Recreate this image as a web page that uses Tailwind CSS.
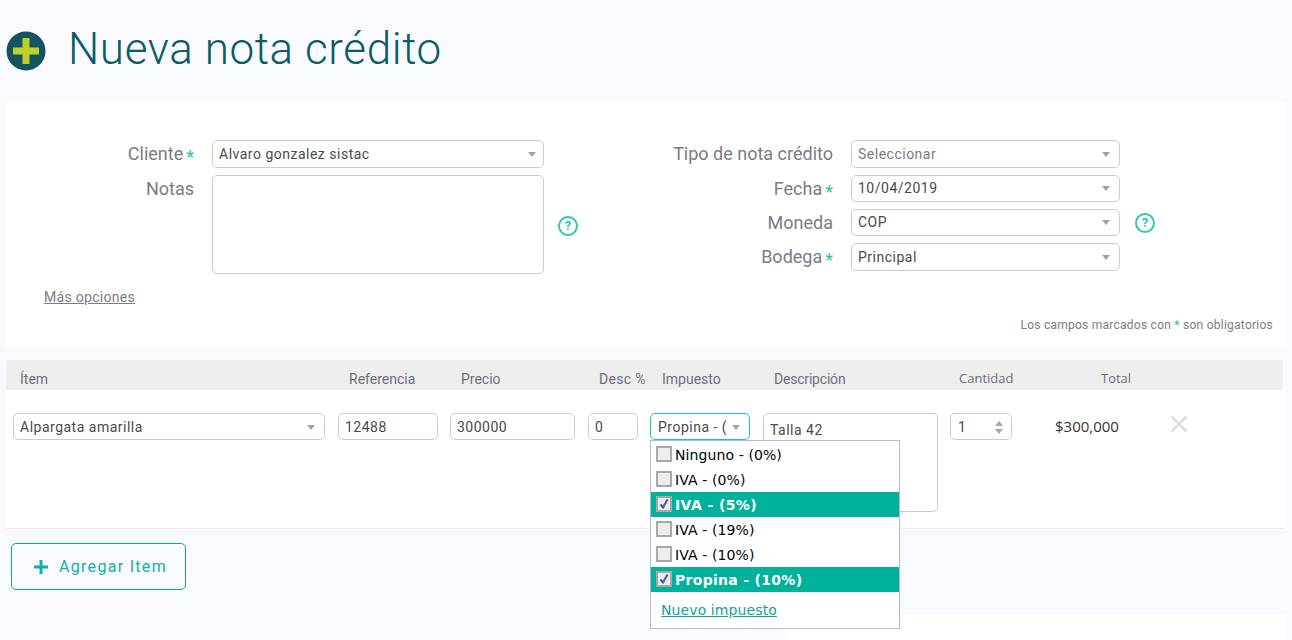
<!DOCTYPE html>
<html lang="es">
<head>
    <meta charset="UTF-8">
    <title>Nueva nota crédito</title>
    <script src="https://cdn.jsdelivr.net/npm/@tailwindcss/browser@4"></script>
</head>
<body class="bg-[#f9faff] font-['Roboto',sans-serif] h-[640px] overflow-hidden relative">

    <!-- Titulo -->
    <div class="h-[102px] pl-[6px] pt-[31px] flex items-start">
        <svg width="40" height="40" viewBox="0 0 40 40" class="shrink-0">
            <circle cx="20" cy="20" r="19.5" fill="#14535f"/>
            <path d="M16.500 7h7v9.500H33v7h-9.500V33h-7v-9.500H7v-7h9.500z" fill="#bdd12a"/>
        </svg>
        <h1 class="ml-[22px] -mt-[10px] text-[44px] leading-[56px] font-light text-[#0b5c68] tracking-[0.6px]">Nueva nota crédito</h1>
    </div>

    <!-- Formulario -->
    <div class="mx-[6px] w-[1279px] h-[245px] bg-white pt-[38px] relative">
        <div class="flex">
            <div class="w-[538px] shrink-0">
                <div class="flex items-center h-[28px]">
                    <div class="w-[188px] shrink-0 text-right text-[18px] text-[#7b7b86] pb-[2px]">Cliente<span class="relative top-[3px] text-[#1fc4ad] ml-[3px]">*</span></div>
                    <div class="ml-[18px] w-[332px] shrink-0 h-[28px] border border-[#cccccc] rounded-[5px] flex items-center justify-between pl-[6px] pr-[7px] text-[14px] text-[#4a4a4a] tracking-[0.5px]">
                        <span>Alvaro gonzalez sistac</span>
                        <span class="w-0 h-0 border-x-[4px] border-x-transparent border-t-[5px] border-t-[#a0a0aa]"></span>
                    </div>
                </div>
                <div class="flex mt-[7px]">
                    <div class="w-[188px] shrink-0 text-right text-[18px] text-[#7b7b86] leading-[28px]">Notas</div>
                    <div class="ml-[18px] w-[332px] shrink-0 h-[99px] border border-[#cccccc] rounded-[5px]"></div>
                    <div class="ml-[14px] mt-[41px]">
                        <div class="w-[20px] h-[20px] rounded-full border-2 border-[#2cc8b2] text-[#2cc8b2] text-[13px] font-bold flex items-center justify-center">?</div>
                    </div>
                </div>
                <a class="block ml-[38px] mt-[13px] text-[14px] text-[#7b7b86] underline tracking-[0.3px]">Más opciones</a>
            </div>

            <div class="ml-[101px]">
                <div class="flex items-center h-[28px]">
                    <div class="w-[188px] shrink-0 text-right text-[18px] text-[#7b7b86] whitespace-nowrap pb-[2px]">Tipo de nota crédito</div>
                    <div class="ml-[18px] w-[269px] h-[28px] border border-[#cccccc] rounded-[5px] flex items-center justify-between pl-[6px] pr-[9px] text-[14px] text-[#7b7b86] tracking-[0.5px]">
                        <span>Seleccionar</span>
                        <span class="w-0 h-0 border-x-[4px] border-x-transparent border-t-[5px] border-t-[#a0a0aa]"></span>
                    </div>
                </div>
                <div class="flex items-center h-[27px] mt-[7px]">
                    <div class="w-[188px] shrink-0 text-right text-[18px] text-[#7b7b86] whitespace-nowrap">Fecha<span class="relative top-[3px] text-[#1fc4ad] ml-[3px]">*</span></div>
                    <div class="ml-[18px] w-[269px] h-[27px] border border-[#cccccc] rounded-[5px] flex items-center justify-between pl-[6px] pr-[9px] text-[14px] text-[#4a4a4a] tracking-[0.5px]">
                        <span>10/04/2019</span>
                        <span class="w-0 h-0 border-x-[4px] border-x-transparent border-t-[5px] border-t-[#a0a0aa]"></span>
                    </div>
                </div>
                <div class="flex items-center h-[27px] mt-[7px]">
                    <div class="w-[188px] shrink-0 text-right text-[18px] text-[#7b7b86]">Moneda</div>
                    <div class="ml-[18px] w-[269px] h-[27px] border border-[#cccccc] rounded-[5px] flex items-center justify-between pl-[6px] pr-[9px] text-[14px] text-[#4a4a4a] tracking-[0.5px]">
                        <span>COP</span>
                        <span class="w-0 h-0 border-x-[4px] border-x-transparent border-t-[5px] border-t-[#a0a0aa]"></span>
                    </div>
                    <div class="ml-[15px] w-[20px] h-[20px] rounded-full border-2 border-[#2cc8b2] text-[#2cc8b2] text-[13px] font-bold flex items-center justify-center">?</div>
                </div>
                <div class="flex items-center h-[28px] mt-[7px]">
                    <div class="w-[188px] shrink-0 text-right text-[18px] text-[#7b7b86] pb-[2px]">Bodega<span class="relative top-[3px] text-[#1fc4ad] ml-[3px]">*</span></div>
                    <div class="ml-[18px] w-[269px] h-[28px] border border-[#cccccc] rounded-[5px] flex items-center justify-between pl-[6px] pr-[9px] text-[14px] text-[#4a4a4a] tracking-[0.5px]">
                        <span>Principal</span>
                        <span class="w-0 h-0 border-x-[4px] border-x-transparent border-t-[5px] border-t-[#a0a0aa]"></span>
                    </div>
                </div>
            </div>
        </div>
        <p class="absolute right-[12px] top-[214px] text-[12px] text-[#7b7b86] tracking-[0.25px]">Los campos marcados con <span class="text-[#1fc4ad]">*</span> son obligatorios</p>
    </div>

    <!-- Tabla de items -->
    <div class="mx-[6px] mt-[13px] w-[1279px]">
        <div class="bg-white">
            <div class="h-[30px] w-[1277px] bg-[#eeeeee] pl-[7px] pt-[8px] grid grid-cols-[325px_112px_138px_62px_113px_187px_105px_auto] items-center text-[14px] text-[#6f6f78]">
                <div class="pl-[7px]">Ítem</div>
                <div class="pl-[11px]">Referencia</div>
                <div class="pl-[11px]">Precio</div>
                <div class="pl-[11px] whitespace-nowrap tracking-[0.3px]">Desc %</div>
                <div class="pl-[12px]">Impuesto</div>
                <div class="pl-[11px] tracking-[-0.2px]">Descripción</div>
                <div class="pl-[9px] font-['Open_Sans',sans-serif] text-[13px]">Cantidad</div>
                <div class="pl-[46px] font-['Open_Sans',sans-serif] text-[13px]">Total</div>
            </div>
            <div class="h-[139px] border-b border-[#eeeeee] pl-[7px] pt-[23px] grid grid-cols-[325px_112px_138px_62px_113px_187px_105px_115px_auto] items-start text-[14px] text-[#4a4a4a] tracking-[0.5px]">
                <div class="w-[312px] h-[27px] border border-[#cccccc] rounded-[5px] flex items-center justify-between pl-[6px] pr-[9px] pt-[1px]">
                    <span>Alpargata amarilla</span>
                    <span class="w-0 h-0 border-x-[4px] border-x-transparent border-t-[5px] border-t-[#a0a0aa]"></span>
                </div>
                <div class="w-[100px] h-[27px] border border-[#cccccc] rounded-[5px] flex items-center pl-[6px] pt-[1px]">12488</div>
                <div class="w-[125px] h-[27px] border border-[#cccccc] rounded-[5px] flex items-center pl-[6px] pt-[1px]">300000</div>
                <div class="w-[50px] h-[27px] border border-[#cccccc] rounded-[5px] flex items-center pl-[6px] pt-[1px]">0</div>
                <div class="w-[100px] h-[27px] border border-[#1fc4ad] rounded-[5px] flex items-center justify-between pl-[7px] pr-[9px] pt-[1px]">
                    <span class="whitespace-nowrap">Propina - (</span>
                    <span class="w-0 h-0 border-x-[4px] border-x-transparent border-t-[5px] border-t-[#a0a0aa]"></span>
                </div>
                <div class="w-[175px] h-[99px] border border-[#cccccc] rounded-[5px] pl-[6px] pt-[6px]">Talla 42</div>
                <div class="w-[62px] h-[27px] border border-[#cccccc] rounded-[5px] flex items-center justify-between pl-[7px] pr-[8px] pt-[1px]">
                    <span>1</span>
                    <span class="flex flex-col gap-[3px]">
                        <span class="block w-0 h-0 border-x-[4px] border-x-transparent border-b-[5px] border-b-[#a5a5ad]"></span>
                        <span class="block w-0 h-0 border-x-[4px] border-x-transparent border-t-[5px] border-t-[#a5a5ad]"></span>
                    </span>
                </div>
                <div class="h-[27px] flex items-center font-['Open_Sans',sans-serif] text-[15px] tracking-normal text-[#333333]">$300,000</div>
                <svg width="18" height="18" viewBox="0 0 18 18" class="mt-[2px]"><path d="M1.500 1.500l15 15M16.500 1.500l-15 15" stroke="#dcdcdc" stroke-width="2.500"/></svg>
            </div>
        </div>
        <button class="mt-[14px] ml-[5px] w-[175px] h-[47px] border border-[#10a594] rounded-[5px] flex items-center justify-start pl-[22px] gap-[11px] text-[#10b19e] text-[16px] tracking-[1.3px]">
            <svg width="14" height="14" viewBox="0 0 14 14"><path d="M5.500 0h3v5.500H14v3H8.500V14h-3V8.500H0v-3h5.500z" fill="#10b19e"/></svg>
            <span class="pt-[1px]">Agregar Item</span>
        </button>
    </div>

    <!-- Bloque inferior derecho -->
    <div class="absolute left-[785px] top-[615px] w-[500px] h-[25px] bg-white"></div>

    <!-- Desplegable de impuestos -->
    <div class="absolute left-[650px] top-[440px] w-[250px] h-[189px] bg-white border border-[#b5b8c8] pt-[1px] font-['DejaVu_Sans',sans-serif] text-[14px] text-black tracking-[0.1px]">
        <div class="h-[25px] flex items-center pl-[5px] pt-[2px]"><span class="w-[16px] h-[16px] border-2 border-[#a8a8a8] bg-[#ececec] mr-[3px] mb-[4px] shrink-0"></span>Ninguno - (0%)</div>
        <div class="h-[25px] flex items-center pl-[5px] pt-[2px]"><span class="w-[16px] h-[16px] border-2 border-[#a8a8a8] bg-[#ececec] mr-[3px] mb-[4px] shrink-0"></span>IVA - (0%)</div>
        <div class="h-[25px] flex items-center pl-[5px] pt-[2px] bg-[#00b29c] text-white font-bold tracking-[0.4px]"><span class="w-[16px] h-[16px] border-2 border-[#a8a8a8] bg-[#ececec] mr-[3px] mb-[4px] shrink-0 flex items-center justify-center"><svg width="12" height="12" viewBox="0 0 12 12"><path d="M2.500 6.500l2.500 3 4.500-8" fill="none" stroke="#4a55b0" stroke-width="2"/></svg></span>IVA - (5%)</div>
        <div class="h-[25px] flex items-center pl-[5px] pt-[2px]"><span class="w-[16px] h-[16px] border-2 border-[#a8a8a8] bg-[#ececec] mr-[3px] mb-[4px] shrink-0"></span>IVA - (19%)</div>
        <div class="h-[25px] flex items-center pl-[5px] pt-[2px]"><span class="w-[16px] h-[16px] border-2 border-[#a8a8a8] bg-[#ececec] mr-[3px] mb-[4px] shrink-0"></span>IVA - (10%)</div>
        <div class="h-[25px] flex items-center pl-[5px] pt-[2px] bg-[#00b29c] text-white font-bold tracking-[0.3px]"><span class="w-[16px] h-[16px] border-2 border-[#a8a8a8] bg-[#ececec] mr-[3px] mb-[4px] shrink-0 flex items-center justify-center"><svg width="12" height="12" viewBox="0 0 12 12"><path d="M2.500 6.500l2.500 3 4.500-8" fill="none" stroke="#4a55b0" stroke-width="2"/></svg></span>Propina - (10%)</div>
        <a class="block ml-[10px] mt-[8px] text-[#10a594] underline">Nuevo impuesto</a>
    </div>

</body>
</html>
